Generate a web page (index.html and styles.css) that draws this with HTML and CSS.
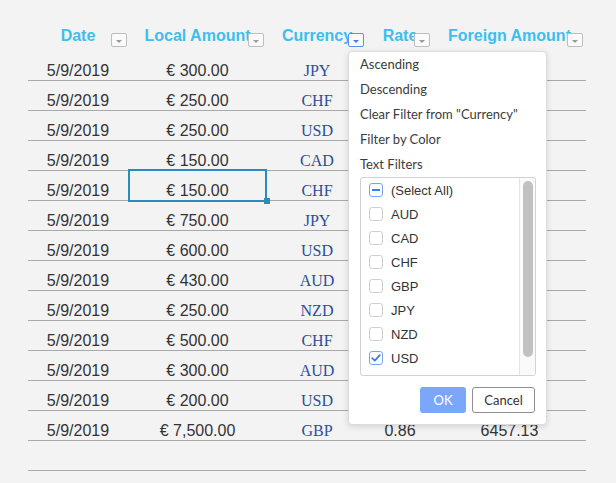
FILE: index.html
```html
<!DOCTYPE html>
<html>
<head>
<meta charset="utf-8">
<link rel="stylesheet" href="styles.css">
</head>
<body>
<div class="sheet">
  <div class="grid">
    <div class="hrow">
      <div class="hcell">Date<span class="fbtn first"></span></div>
      <div class="hcell">Local Amount<span class="fbtn"></span></div>
      <div class="hcell">Currency<span class="fbtn active"></span></div>
      <div class="hcell">Rate<span class="fbtn"></span></div>
      <div class="hcell">Foreign Amount<span class="fbtn"></span></div>
    </div>
    <div class="row"><div class="c">5/9/2019</div><div class="c">€ 300.00</div><div class="c cur">JPY</div><div class="c"></div><div class="c"></div></div>
    <div class="row"><div class="c">5/9/2019</div><div class="c">€ 250.00</div><div class="c cur">CHF</div><div class="c"></div><div class="c"></div></div>
    <div class="row"><div class="c">5/9/2019</div><div class="c">€ 250.00</div><div class="c cur">USD</div><div class="c"></div><div class="c"></div></div>
    <div class="row"><div class="c">5/9/2019</div><div class="c">€ 150.00</div><div class="c cur">CAD</div><div class="c"></div><div class="c"></div></div>
    <div class="row"><div class="c">5/9/2019</div><div class="c selected">€ 150.00</div><div class="c cur">CHF</div><div class="c"></div><div class="c"></div></div>
    <div class="row"><div class="c">5/9/2019</div><div class="c">€ 750.00</div><div class="c cur">JPY</div><div class="c"></div><div class="c"></div></div>
    <div class="row"><div class="c">5/9/2019</div><div class="c">€ 600.00</div><div class="c cur">USD</div><div class="c"></div><div class="c"></div></div>
    <div class="row"><div class="c">5/9/2019</div><div class="c">€ 430.00</div><div class="c cur">AUD</div><div class="c"></div><div class="c"></div></div>
    <div class="row"><div class="c">5/9/2019</div><div class="c">€ 250.00</div><div class="c cur">NZD</div><div class="c"></div><div class="c"></div></div>
    <div class="row"><div class="c">5/9/2019</div><div class="c">€ 500.00</div><div class="c cur">CHF</div><div class="c"></div><div class="c"></div></div>
    <div class="row"><div class="c">5/9/2019</div><div class="c">€ 300.00</div><div class="c cur">AUD</div><div class="c"></div><div class="c"></div></div>
    <div class="row"><div class="c">5/9/2019</div><div class="c">€ 200.00</div><div class="c cur">USD</div><div class="c"></div><div class="c"></div></div>
    <div class="row"><div class="c">5/9/2019</div><div class="c">€ 7,500.00</div><div class="c cur">GBP</div><div class="c">0.86</div><div class="c">6457.13</div></div>
    <div class="row"><div class="c"></div><div class="c"></div><div class="c"></div><div class="c"></div><div class="c"></div></div>
  </div>

  <div class="popup">
    <ul class="menu">
      <li>Ascending</li>
      <li>Descending</li>
      <li>Clear Filter from "Currency"</li>
      <li>Filter by Color</li>
      <li>Text Filters</li>
    </ul>
    <div class="listbox">
      <div class="items">
        <div class="item"><span class="cb partial"></span>(Select All)</div>
        <div class="item"><span class="cb"></span>AUD</div>
        <div class="item"><span class="cb"></span>CAD</div>
        <div class="item"><span class="cb"></span>CHF</div>
        <div class="item"><span class="cb"></span>GBP</div>
        <div class="item"><span class="cb"></span>JPY</div>
        <div class="item"><span class="cb"></span>NZD</div>
        <div class="item"><span class="cb checked"><svg width="10" height="8" viewBox="0 0 10 8"><path d="M1.2 4.2 L3.8 6.6 L8.8 1.2" fill="none" stroke="#3f7cf0" stroke-width="1.8" stroke-linecap="round" stroke-linejoin="round"/></svg></span>USD</div>
        <div class="item"><span class="cb"></span></div>
      </div>
      <div class="track"><div class="thumb"></div></div>
    </div>
    <div class="actions">
      <button class="btn ok">OK</button>
      <button class="btn cancel">Cancel</button>
    </div>
  </div>
</div>
</body>
</html>
```

FILE: styles.css
```css
html, body {
  margin: 0;
  background: #f3f3f3;
  font-family: "Liberation Sans", Arial, sans-serif;
}

.sheet {
  position: relative;
  height: 483px;
  box-sizing: border-box;
  padding: 21px 0 0 28px;
}

.grid {
  width: 558px;
}

.hrow,
.row {
  display: grid;
  grid-template-columns: 100px 139px 100px 66px 153px;
}

.hrow {
  height: 30px;
}

.hcell {
  position: relative;
  text-align: center;
  font-weight: bold;
  font-size: 16px;
  line-height: 29px;
  color: #3dbef0;
  white-space: nowrap;
}

.fbtn {
  position: absolute;
  right: 3px;
  bottom: 4px;
  width: 16px;
  height: 14px;
  box-sizing: border-box;
  border: 1px solid #bdbdbd;
  border-radius: 2px;
  background: #fafafa;
}

.fbtn.first {
  right: 1px;
}

.fbtn::after {
  content: "";
  position: absolute;
  left: 4px;
  top: 6px;
  border-left: 3px solid transparent;
  border-right: 3px solid transparent;
  border-top: 3px solid #9a9a9a;
}

.fbtn.active {
  border-color: #5d8ef6;
}

.fbtn.active::after {
  border-top-color: #3f7cf0;
}

.row {
  height: 30px;
  box-sizing: border-box;
  border-bottom: 1px solid #a9a9a9;
}

.c {
  position: relative;
  text-align: center;
  padding-top: 11px;
  line-height: 18px;
  font-size: 16px;
  color: #333;
  white-space: nowrap;
}

.cur {
  font-family: "Liberation Serif", "Times New Roman", serif;
  color: #2c4d9c;
}

.selected::after {
  content: "";
  position: absolute;
  left: 0;
  right: 0;
  top: -2px;
  bottom: -2px;
  border: 2px solid #2a8bbf;
}

.selected::before {
  content: "";
  position: absolute;
  right: -3px;
  bottom: -4px;
  width: 6px;
  height: 6px;
  background: #2a8bbf;
  z-index: 1;
}

/* popup */
.popup {
  position: absolute;
  left: 348px;
  top: 51px;
  width: 199px;
  box-sizing: border-box;
  padding: 0 10px 11px 11px;
  background: #fff;
  border: 1px solid #dcdcdc;
  border-radius: 4px;
  box-shadow: 0 2px 6px rgba(0, 0, 0, 0.13);
  display: flex;
  flex-direction: column;
}

.menu {
  list-style: none;
  margin: 0;
  padding: 0;
  font-family: Lato, "Liberation Sans", sans-serif;
  font-size: 13px;
  line-height: 25px;
  color: #3c3c3c;
  white-space: nowrap;
}

.listbox {
  height: 199px;
  box-sizing: border-box;
  border: 1px solid #d2d2d2;
  border-radius: 3px;
  display: flex;
  overflow: hidden;
}

.items {
  flex: 1;
  overflow: hidden;
}

.item {
  display: flex;
  align-items: center;
  gap: 8px;
  height: 24px;
  padding-left: 8px;
  font-size: 13px;
  color: #333;
}

.cb {
  width: 14px;
  height: 14px;
  box-sizing: border-box;
  border: 1px solid #cfcfcf;
  border-radius: 3px;
  background: #fff;
  display: flex;
  align-items: center;
  justify-content: center;
  flex: none;
}

.cb.partial,
.cb.checked {
  border-color: #7aa3f5;
}

.cb.partial::after {
  content: "";
  width: 8px;
  height: 2px;
  background: #3f7cf0;
}

.track {
  width: 16px;
  box-sizing: border-box;
  border-left: 1px solid #e4e4e4;
  background: #fafafa;
  padding: 3px 2px 0 3px;
}

.thumb {
  width: 10px;
  height: 176px;
  border-radius: 5px;
  background: #c1c1c1;
}

.actions {
  display: flex;
  justify-content: flex-end;
  gap: 6px;
  margin-top: 11px;
  padding-right: 1px;
}

.btn {
  height: 26px;
  box-sizing: border-box;
  border-radius: 3px;
  font-family: Lato, "Liberation Sans", sans-serif;
  font-size: 13px;
  padding: 0;
  margin: 0;
}

.ok {
  width: 46px;
  border: none;
  background: #7ba7fb;
  color: #fff;
}

.cancel {
  width: 63px;
  border: 1px solid #8f8f8f;
  background: #fff;
  color: #333;
}
```
